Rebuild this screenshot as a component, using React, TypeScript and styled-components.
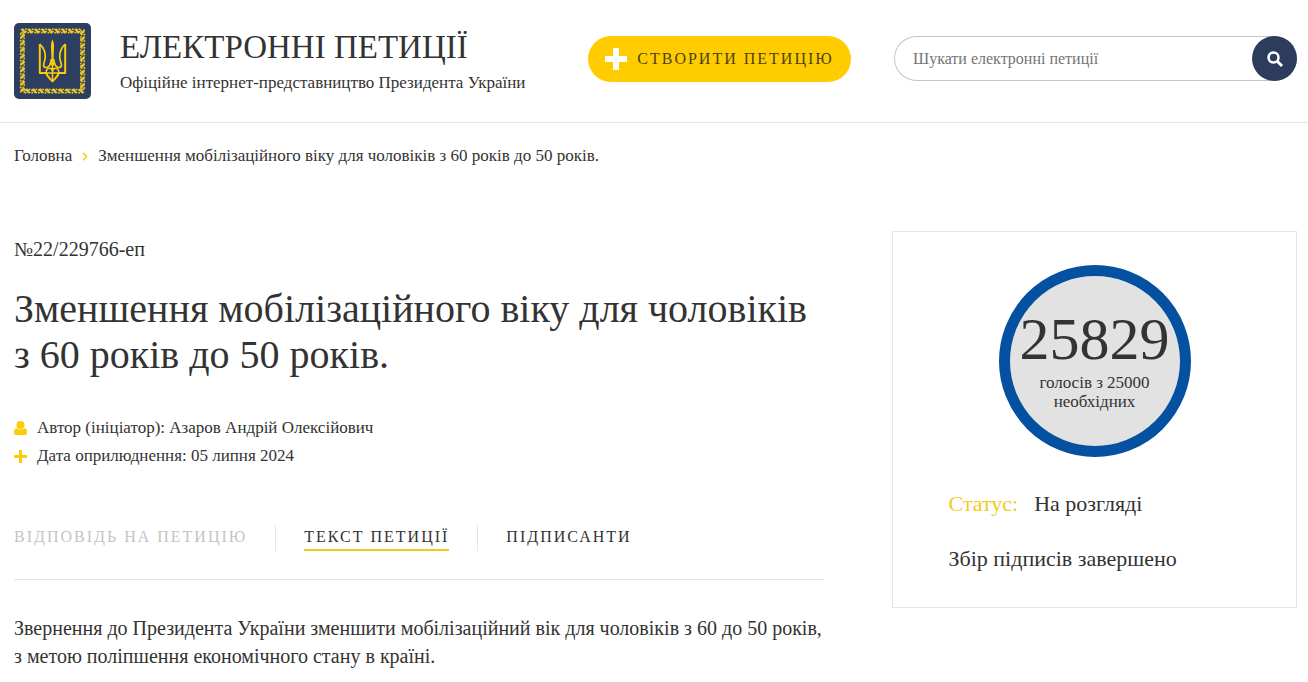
import React from "react";
import styled, { createGlobalStyle } from "styled-components";

const GlobalStyle = createGlobalStyle`
  *, *::before, *::after { box-sizing: border-box; }
  body {
    margin: 0;
    background: #fff;
    color: #333;
    font-family: "Liberation Serif", "Times New Roman", serif;
    font-size: 17px;
    line-height: 28px;
  }
  h1, p, ul, ol, dl, dd { margin: 0; padding: 0; font-weight: 400; }
  ul, ol { list-style: none; }
  a { color: inherit; text-decoration: none; }
  button, input { font: inherit; color: inherit; }
`;

const Header = styled.header`
  display: flex;
  align-items: center;
  padding: 23px 11px 23px 14px;
  border-bottom: 1px solid #e5e5e5;
`;

const Brand = styled.a`
  display: flex;
  align-items: center;
  gap: 29px;
  width: 574px;
  flex-shrink: 0;
`;

const BrandText = styled.span`
  display: flex;
  flex-direction: column;
`;

const BrandTitle = styled.span`
  font-size: 33px;
  line-height: 44px;
`;

const BrandSubtitle = styled.span`
  white-space: nowrap;
`;

const Actions = styled.div`
  display: flex;
  align-items: flex-start;
  flex: 1;
  min-width: 0;
  padding-bottom: 4px;
`;

const CreateButton = styled.button`
  display: flex;
  align-items: center;
  justify-content: center;
  gap: 10px;
  width: 263px;
  height: 46px;
  flex-shrink: 0;
  padding: 0;
  border: 0;
  border-radius: 23px;
  background: #fc0;
  color: #4d4310;
  font-size: 16px;
  letter-spacing: 2px;
  white-space: nowrap;
  cursor: pointer;
`;

const SearchForm = styled.form`
  display: flex;
  flex: 1;
  min-width: 0;
  height: 45px;
  margin-left: 43px;
  border-radius: 23px;
  box-shadow: inset 0 0 0 1px #c5c5c8;
`;

const SearchInput = styled.input`
  flex: 1;
  min-width: 0;
  padding: 0 19px;
  border: 0;
  background: transparent;
  outline-offset: -1px;
  font-size: 16px;
  &::placeholder { color: #757575; opacity: 1; }
`;

const SearchButton = styled.button`
  display: grid;
  place-items: center;
  width: 45px;
  height: 45px;
  padding: 0;
  border: 0;
  border-radius: 50%;
  background: #2d3c5d;
  cursor: pointer;
`;

const Breadcrumbs = styled.ol`
  display: flex;
  align-items: center;
  gap: 10px;
  padding: 19px 14px 18px;
`;

const Crumb = styled.li`
  display: flex;
  align-items: center;
  gap: 10px;
`;

const Columns = styled.main`
  display: grid;
  grid-template-columns: minmax(0, 2fr) minmax(0, 1fr);
  align-items: start;
  gap: 68px;
  padding: 43px 11px 12px 14px;
`;

const PetitionNumber = styled.p`
  padding-top: 4px;
  font-size: 20px;
`;

const Title = styled.h1`
  margin-top: 23px;
  font-size: 40px;
  line-height: 46px;
`;

const MetaList = styled.ul`
  margin-top: 36px;
`;

const MetaItem = styled.li`
  display: flex;
  align-items: center;
  gap: 10px;
`;

const Tabs = styled.div`
  display: flex;
  align-items: center;
  margin-top: 55px;
  padding-bottom: 28px;
  border-bottom: 1px solid #e5e5e5;
`;

const TabCell = styled.div`
  display: flex;
  & + & {
    margin-left: 28px;
    padding-left: 28px;
    border-left: 1px solid #e5e5e5;
  }
`;

const Tab = styled.button<{ $active?: boolean }>`
  padding: 0;
  border: 0;
  border-bottom: 2px solid ${(p) => (p.$active ? "#f0cb1a" : "transparent")};
  background: none;
  font-size: 16px;
  line-height: 24px;
  letter-spacing: 2px;
  white-space: nowrap;
  cursor: pointer;
  &:disabled { color: #c4c4c4; cursor: default; }
`;

const PetitionText = styled.p`
  margin-top: 34px;
  font-size: 20px;
`;

const VotesCard = styled.aside`
  display: flex;
  flex-direction: column;
  align-items: center;
  padding: 33px 20px 34px;
  border: 1px solid #e5e5e5;
`;

const Counter = styled.div`
  display: flex;
  flex-direction: column;
  align-items: center;
  width: 192px;
  height: 192px;
  padding-top: 30px;
  border: 11px solid #0351a0;
  border-radius: 50%;
  background: #e2e2e2;
  text-align: center;
`;

const CounterValue = styled.strong`
  font-size: 60px;
  font-weight: 400;
  line-height: 67px;
`;

const CounterLabel = styled.span`
  width: 130px;
  font-size: 17px;
  line-height: 19px;
`;

const StatusBlock = styled.div`
  display: flex;
  flex-direction: column;
  gap: 27px;
  width: 292px;
  margin-top: 33px;
  font-size: 22px;
`;

const StatusRow = styled.dl`
  display: flex;
  gap: 16px;
`;

const StatusName = styled.dt`
  color: #f2cb1d;
`;

const LEAF_STEPS = [0, 1, 2, 3, 4, 5, 6, 7, 8];

const WreathSide = ({ angle }: { angle: number }) => (
  <g transform={`rotate(${angle} 38.5 38)`}>
    {LEAF_STEPS.map((i) => (
      <g key={i} transform={`translate(${9.5 + i * 6.7} 8)`}>
        <path d="M-3-1.800C-1.500-3 .5-2.600 1.200-.6 2 .2 3 .2 3.600-.4 3.800 1.600 2.200 2.800.4 2.400-.8 2-1 .8-1.600-.2-2-.8-2.600-1-3-1.800z" />
        <circle cx="2.400" cy="-1.800" r="1" />
        <circle cx="-1.900" cy="1.700" r=".9" />
      </g>
    ))}
  </g>
);

const Emblem = () => (
  <svg width="77" height="76" viewBox="0 0 77 76" aria-hidden="true">
    <rect width="77" height="76" rx="5" fill="#2d3f61" />
    <g fill="#e9c52a">
      {[0, 90, 180, 270].map((a) => (
        <WreathSide key={a} angle={a} />
      ))}
    </g>
    <g fill="none" stroke="#fccb0a" strokeLinejoin="round">
      <path
        d="M25.800 21v29h6.400c.8 4 3.800 5 6.300 8.300 2.500-3.300 5.500-4.300 6.300-8.300h6.400V21"
        strokeWidth="2"
      />
      <path
        d="M25.800 21c4.200 4 5.800 8.500 5.400 13.500-.3 4-1.600 5.500-1.600 7.500 0 1.600 1 2.500 2.400 2.500 3.500 0 4.800-3.500 5.300-8.500M51.200 21c-4.200 4-5.800 8.500-5.400 13.500.3 4 1.600 5.500 1.600 7.500 0 1.600-1 2.500-2.400 2.500-3.500 0-4.800-3.500-5.300-8.500"
        strokeWidth="1.700"
      />
      <path
        d="M32.200 50c0-3 1.200-4.700 3.200-4.700 2.200 0 3.100 2 3.100 4.700 0-2.700.9-4.700 3.100-4.700 2 0 3.200 1.700 3.200 4.700M32.200 50h12.600M38.500 42v15"
        strokeWidth="1.500"
      />
    </g>
    <path d="M38.500 16.500c1.200 2.500 1.700 4.500 1.500 8l-.4 10c0 3 .4 5.500.9 8h-4c.5-2.500.9-5 .9-8l-.4-10c-.2-3.500.3-5.500 1.500-8z" fill="#fccb0a" />
  </svg>
);

const PlusIcon = ({ size, color, bar }: { size: number; color: string; bar: number }) => (
  <svg width={size} height={size} viewBox={`0 0 ${size} ${size}`} aria-hidden="true">
    <path
      d={`M${size / 2} 0V${size}M0 ${size / 2}H${size}`}
      stroke={color}
      strokeWidth={bar}
    />
  </svg>
);

const SearchIcon = () => (
  <svg width="18" height="18" viewBox="0 0 18 18" fill="none" stroke="#fff" aria-hidden="true">
    <circle cx="7.500" cy="7.500" r="5" strokeWidth="2.500" />
    <path d="M11 11l5 5" strokeWidth="3" />
  </svg>
);

const PersonIcon = () => (
  <svg width="13" height="14" viewBox="0 0 13 14" fill="#fccb0a" aria-hidden="true">
    <path d="M2.600 7C.8 7.400 0 8.800 0 11.200V12c0 1.200.8 2 2 2h9c1.200 0 2-.8 2-2v-.8c0-2.400-.8-3.800-2.600-4.200-1 1-2.300 1.500-3.900 1.500S3.600 8 2.600 7z" />
    <circle cx="6.500" cy="4" r="4" />
  </svg>
);

const ChevronIcon = () => (
  <svg width="6" height="9" viewBox="0 0 6 9" fill="none" aria-hidden="true">
    <path d="M1 .8l3.500 3.700L1 8.200" stroke="#f5c928" strokeWidth="1.600" />
  </svg>
);

export default function App() {
  return (
    <>
      <GlobalStyle />
      <Header>
        <Brand href="#">
          <Emblem />
          <BrandText>
            <BrandTitle>ЕЛЕКТРОННІ ПЕТИЦІЇ</BrandTitle>
            <BrandSubtitle>Офіційне інтернет-представництво Президента України</BrandSubtitle>
          </BrandText>
        </Brand>
        <Actions>
          <CreateButton type="button">
            <PlusIcon size={22} bar={6} color="#fff" />
            СТВОРИТИ ПЕТИЦІЮ
          </CreateButton>
          <SearchForm role="search" onSubmit={(e) => e.preventDefault()}>
            <SearchInput
              type="text"
              aria-label="Шукати електронні петиції"
              placeholder="Шукати електронні петиції"
            />
            <SearchButton type="submit" aria-label="Шукати">
              <SearchIcon />
            </SearchButton>
          </SearchForm>
        </Actions>
      </Header>

      <nav>
        <Breadcrumbs>
          <Crumb>
            <a href="#">Головна</a>
            <ChevronIcon />
          </Crumb>
          <Crumb>Зменшення мобілізаційного віку для чоловіків з 60 років до 50 років.</Crumb>
        </Breadcrumbs>
      </nav>

      <Columns>
        <article>
          <PetitionNumber>№22/229766-еп</PetitionNumber>
          <Title>Зменшення мобілізаційного віку для чоловіків з 60 років до 50 років.</Title>
          <MetaList>
            <MetaItem>
              <PersonIcon />
              Автор (ініціатор): Азаров Андрій Олексійович
            </MetaItem>
            <MetaItem>
              <PlusIcon size={13} bar={3} color="#fccb0a" />
              Дата оприлюднення: 05 липня 2024
            </MetaItem>
          </MetaList>
          <Tabs>
            <TabCell>
              <Tab type="button" disabled>ВІДПОВІДЬ НА ПЕТИЦІЮ</Tab>
            </TabCell>
            <TabCell>
              <Tab type="button" $active>ТЕКСТ ПЕТИЦІЇ</Tab>
            </TabCell>
            <TabCell>
              <Tab type="button">ПІДПИСАНТИ</Tab>
            </TabCell>
          </Tabs>
          <PetitionText>
            Звернення до Президента України зменшити мобілізаційний вік для чоловіків з 60 до 50
            років, з метою поліпшення економічного стану в країні.
          </PetitionText>
        </article>

        <VotesCard>
          <Counter>
            <CounterValue>25829</CounterValue>
            <CounterLabel>голосів з 25000 необхідних</CounterLabel>
          </Counter>
          <StatusBlock>
            <StatusRow>
              <StatusName>Статус:</StatusName>
              <dd>На розгляді</dd>
            </StatusRow>
            <p>Збір підписів завершено</p>
          </StatusBlock>
        </VotesCard>
      </Columns>
    </>
  );
}
